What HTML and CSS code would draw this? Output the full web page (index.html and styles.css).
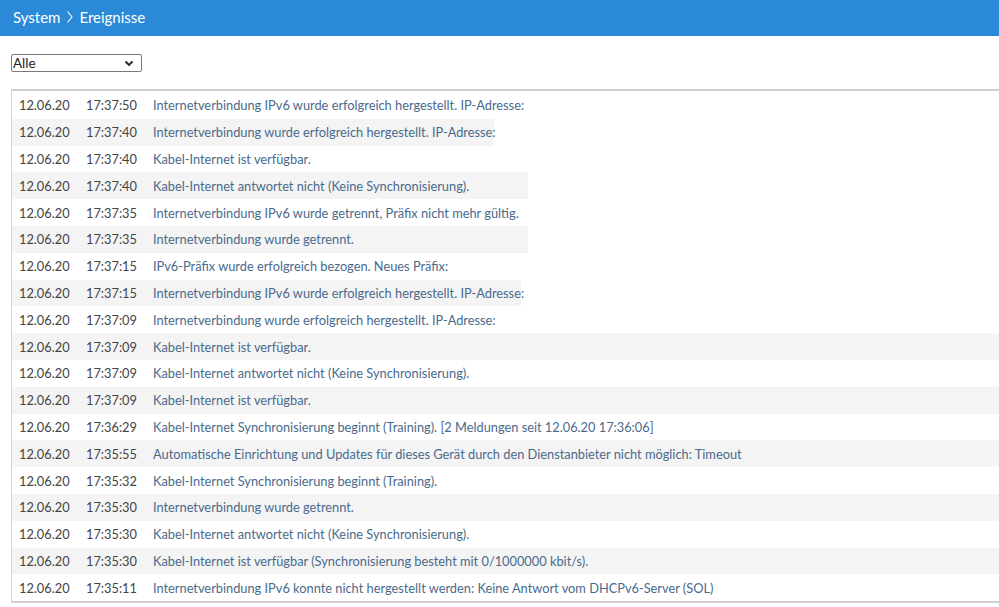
FILE: index.html
```html
<!DOCTYPE html>
<html lang="de">
<head>
<meta charset="utf-8">
<title>System › Ereignisse</title>
<link rel="stylesheet" href="styles.css">
</head>
<body>
<header class="topbar">
  <span class="crumb">System</span>
  <svg class="sep" width="8" height="14" viewBox="0 0 8 14"><path d="M1.5 1.5 L6 7 L1.5 12.5" fill="none" stroke="#fff" stroke-width="1.1"/></svg>
  <span class="crumb">Ereignisse</span>
</header>
<main class="content">
  <div class="filter">
    <div class="select">
      <span>Alle</span>
      <svg width="10" height="7" viewBox="0 0 10 7"><path d="M1.5 1.5 L5 5 L8.5 1.5" fill="none" stroke="#222" stroke-width="1.8"/></svg>
    </div>
  </div>
  <div class="log">
    <div class="row"><span class="d">12.06.20</span><span class="t">17:37:50</span><span class="m">Internetverbindung IPv6 wurde erfolgreich hergestellt. IP-Adresse:</span></div>
    <div class="row alt cut1"><span class="d">12.06.20</span><span class="t">17:37:40</span><span class="m">Internetverbindung wurde erfolgreich hergestellt. IP-Adresse:</span></div>
    <div class="row"><span class="d">12.06.20</span><span class="t">17:37:40</span><span class="m">Kabel-Internet ist verfügbar.</span></div>
    <div class="row alt cut2"><span class="d">12.06.20</span><span class="t">17:37:40</span><span class="m">Kabel-Internet antwortet nicht (Keine Synchronisierung).</span></div>
    <div class="row"><span class="d">12.06.20</span><span class="t">17:37:35</span><span class="m">Internetverbindung IPv6 wurde getrennt, Präfix nicht mehr gültig.</span></div>
    <div class="row alt cut2"><span class="d">12.06.20</span><span class="t">17:37:35</span><span class="m">Internetverbindung wurde getrennt.</span></div>
    <div class="row"><span class="d">12.06.20</span><span class="t">17:37:15</span><span class="m">IPv6-Präfix wurde erfolgreich bezogen. Neues Präfix:</span></div>
    <div class="row alt cut3"><span class="d">12.06.20</span><span class="t">17:37:15</span><span class="m">Internetverbindung IPv6 wurde erfolgreich hergestellt. IP-Adresse:</span></div>
    <div class="row"><span class="d">12.06.20</span><span class="t">17:37:09</span><span class="m">Internetverbindung wurde erfolgreich hergestellt. IP-Adresse:</span></div>
    <div class="row alt"><span class="d">12.06.20</span><span class="t">17:37:09</span><span class="m">Kabel-Internet ist verfügbar.</span></div>
    <div class="row"><span class="d">12.06.20</span><span class="t">17:37:09</span><span class="m">Kabel-Internet antwortet nicht (Keine Synchronisierung).</span></div>
    <div class="row alt"><span class="d">12.06.20</span><span class="t">17:37:09</span><span class="m">Kabel-Internet ist verfügbar.</span></div>
    <div class="row"><span class="d">12.06.20</span><span class="t">17:36:29</span><span class="m">Kabel-Internet Synchronisierung beginnt (Training). [2 Meldungen seit 12.06.20 17:36:06]</span></div>
    <div class="row alt"><span class="d">12.06.20</span><span class="t">17:35:55</span><span class="m">Automatische Einrichtung und Updates für dieses Gerät durch den Dienstanbieter nicht möglich: Timeout</span></div>
    <div class="row"><span class="d">12.06.20</span><span class="t">17:35:32</span><span class="m">Kabel-Internet Synchronisierung beginnt (Training).</span></div>
    <div class="row alt"><span class="d">12.06.20</span><span class="t">17:35:30</span><span class="m">Internetverbindung wurde getrennt.</span></div>
    <div class="row"><span class="d">12.06.20</span><span class="t">17:35:30</span><span class="m">Kabel-Internet antwortet nicht (Keine Synchronisierung).</span></div>
    <div class="row alt"><span class="d">12.06.20</span><span class="t">17:35:30</span><span class="m">Kabel-Internet ist verfügbar (Synchronisierung besteht mit 0/1000000 kbit/s).</span></div>
    <div class="row"><span class="d">12.06.20</span><span class="t">17:35:11</span><span class="m">Internetverbindung IPv6 konnte nicht hergestellt werden: Keine Antwort vom DHCPv6-Server (SOL)</span></div>
  </div>
</main>
</body>
</html>
```
FILE: styles.css
```css
html, body {
  margin: 0;
  padding: 0;
  background: #fff;
  font-family: "Lato", "Open Sans", sans-serif;
  overflow: hidden;
}
.topbar {
  height: 36px;
  background: #2a8ad8;
  display: flex;
  align-items: center;
  gap: 4px;
  padding-left: 13px;
  padding-bottom: 2px;
  box-sizing: border-box;
  color: #fff;
  font-size: 15px;
}
.sep { margin: 0 1px 0 2px; }
.content {
  padding: 18px 0 0 11px;
}
.filter { height: 35px; }
.select {
  width: 131px;
  height: 18px;
  box-sizing: border-box;
  border: 1px solid #7a7a7a;
  border-radius: 2px;
  display: flex;
  align-items: center;
  justify-content: space-between;
  padding: 0 7px 0 1px;
  font-size: 13.5px;
  color: #222;
}
.log {
  border: 1px solid #d4d4d4;
  border-top: 2px solid #cfcfcf;
  border-right: none;
  border-bottom: 2px solid #d0d0d0;
  padding: 1px 0 0;
}
.row {
  height: 26.8px;
  display: flex;
  align-items: center;
  font-size: 12.8px;
  color: #444;
  white-space: nowrap;
}
.row.alt { background: #f4f4f4; }
.row.cut1 { background: linear-gradient(to right, #f4f4f4 482px, #fff 482px); }
.row.cut2 { background: linear-gradient(to right, #f4f4f4 516px, #fff 516px); }
.row.cut3 { background: linear-gradient(to right, #f4f4f4 509px, #fff 509px); }
.d { width: 74px; padding-left: 7px; box-sizing: border-box; flex: none; }
.t { width: 67px; flex: none; }
.m { color: #4a6a8c; }
```
